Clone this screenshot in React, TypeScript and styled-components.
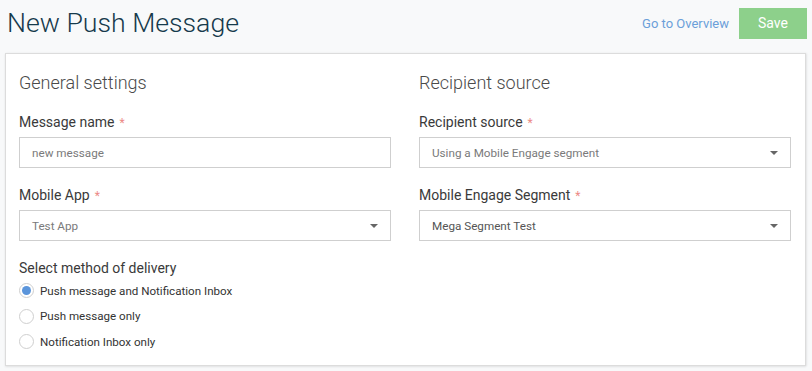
import React from "react";
import styled, { createGlobalStyle } from "styled-components";

const Global = createGlobalStyle`
  html, body { margin: 0; padding: 0; background: #f8f9fa; }
  body { font-family: Roboto, "Liberation Sans", Arial, sans-serif; }
  * { box-sizing: border-box; }
`;

const Page = styled.div`
  width: 812px;
  height: 371px;
  padding: 0 5px 0 5px;
  background: #f8f9fa;
  overflow: hidden;
`;

const Header = styled.div`
  display: flex;
  align-items: center;
  height: 46px;
  padding: 0 0 0 2px;
`;

const Title = styled.h1`
  margin: 0;
  flex: 1;
  font-size: 26.7px;
  font-weight: 300;
  color: #163a4c;
  line-height: 32px;
  padding-bottom: 1px;
`;

const Link = styled.a`
  font-size: 13px;
  color: #6b9fd9;
  text-decoration: none;
  margin-right: 10px;
  margin-top: 1px;
`;

const SaveButton = styled.button`
  width: 68px;
  height: 31px;
  border: none;
  background: #8dd08b;
  color: #fff;
  font-family: inherit;
  font-size: 14px;
  padding: 0;
`;

const Card = styled.div`
  margin-top: 7px;
  height: 313px;
  width: 801px;
  background: #fff;
  border: 1px solid #dcdcdc;
  box-shadow: 0 1px 2px rgba(0, 0, 0, 0.08), 1px 0 2px rgba(0, 0, 0, 0.06);
  padding: 17px 14px 0 13px;
  display: grid;
  grid-template-columns: 372px 372px;
  column-gap: 28px;
  align-items: start;
`;

const Column = styled.div`
  display: flex;
  flex-direction: column;
`;

const SectionTitle = styled.h2`
  margin: 0 0 19px 0;
  font-size: 18px;
  font-weight: 300;
  color: #4a4a4a;
  line-height: 24px;
`;

const Field = styled.div`
  display: flex;
  flex-direction: column;
  margin-bottom: 19px;
`;

const Label = styled.label<{ $tight?: boolean }>`
  display: block;
  height: 17px;
  font-size: 14px;
  color: #3a3a3a;
  line-height: 17px;
  margin-bottom: ${(p) => (p.$tight ? "1px" : "6px")};
`;

const Required = styled.span`
  color: #ec8a86;
  font-size: 12px;
  line-height: 0;
  margin-left: 5px;
`;

const Input = styled.div`
  height: 31px;
  border: 1px solid #cfcfcf;
  background: #fff;
  display: flex;
  align-items: center;
  padding: 0 12px;
  font-size: 11.7px;
  color: #7a7a7a;
`;

const Select = styled(Input)<{ $dark?: boolean }>`
  justify-content: space-between;
  color: ${(p) => (p.$dark ? "#555" : "#7a7a7a")};
`;

const Caret = styled.span`
  width: 0;
  height: 0;
  border-left: 4px solid transparent;
  border-right: 4px solid transparent;
  border-top: 4px solid #666;
  margin-top: 1px;
`;

const RadioGroup = styled.div`
  display: flex;
  flex-direction: column;
`;

const RadioRow = styled.label`
  display: flex;
  align-items: center;
  height: 25.5px;
  font-size: 11.6px;
  color: #333;
`;

const RadioCircle = styled.span<{ $checked?: boolean }>`
  width: 15px;
  height: 15px;
  border-radius: 50%;
  border: 1px solid #cfcfcf;
  background: #fff;
  margin-right: 6px;
  display: flex;
  align-items: center;
  justify-content: center;
  &::after {
    content: "";
    width: 9px;
    height: 9px;
    border-radius: 50%;
    background: ${(p) => (p.$checked ? "#5b95db" : "transparent")};
  }
`;

export default function App() {
  return (
    <>
      <Global />
      <Page>
        <Header>
          <Title>New Push Message</Title>
          <Link href="#">Go to Overview</Link>
          <SaveButton>Save</SaveButton>
        </Header>
        <Card>
          <Column>
            <SectionTitle>General settings</SectionTitle>
            <Field>
              <Label>
                Message name<Required>*</Required>
              </Label>
              <Input>new message</Input>
            </Field>
            <Field>
              <Label>
                Mobile App<Required>*</Required>
              </Label>
              <Select>
                Test App
                <Caret />
              </Select>
            </Field>
            <Label $tight>Select method of delivery</Label>
            <RadioGroup>
              <RadioRow>
                <RadioCircle $checked />
                Push message and Notification Inbox
              </RadioRow>
              <RadioRow>
                <RadioCircle />
                Push message only
              </RadioRow>
              <RadioRow>
                <RadioCircle />
                Notification Inbox only
              </RadioRow>
            </RadioGroup>
          </Column>
          <Column>
            <SectionTitle>Recipient source</SectionTitle>
            <Field>
              <Label>
                Recipient source<Required>*</Required>
              </Label>
              <Select>
                Using a Mobile Engage segment
                <Caret />
              </Select>
            </Field>
            <Field>
              <Label>
                Mobile Engage Segment<Required>*</Required>
              </Label>
              <Select $dark>
                Mega Segment Test
                <Caret />
              </Select>
            </Field>
          </Column>
        </Card>
      </Page>
    </>
  );
}
